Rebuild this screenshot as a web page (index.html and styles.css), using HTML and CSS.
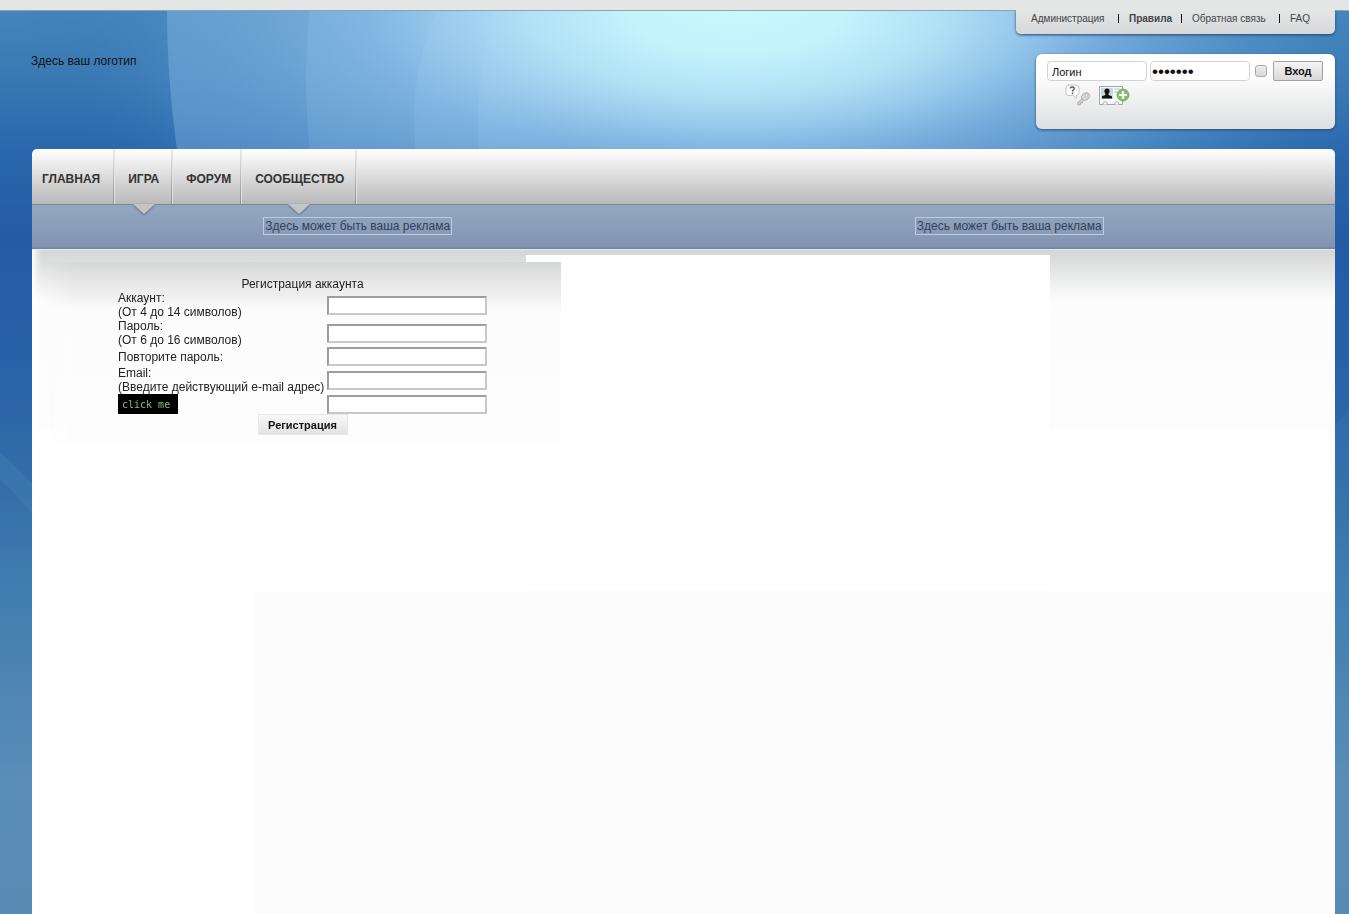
FILE: index.html
```
<!DOCTYPE html>
<html lang="ru">
<head>
<meta charset="utf-8">
<title>Регистрация аккаунта</title>
<link rel="stylesheet" href="styles.css">
</head>
<body>
<svg class="backdrop" viewBox="0 0 1349 914" preserveAspectRatio="none" aria-hidden="true">
  <defs>
    <linearGradient id="base" x1="0" y1="0" x2="0" y2="1">
      <stop offset="0" stop-color="#4588bb"/>
      <stop offset=".08" stop-color="#3a79b3"/>
      <stop offset=".16" stop-color="#2b68ad"/>
      <stop offset=".26" stop-color="#235ba5"/>
      <stop offset=".4" stop-color="#2862a8"/>
      <stop offset=".53" stop-color="#336ea9"/>
      <stop offset=".65" stop-color="#417eb0"/>
      <stop offset=".85" stop-color="#5a8db8"/>
      <stop offset="1" stop-color="#588ab4"/>
    </linearGradient>
    <radialGradient id="glow" gradientUnits="userSpaceOnUse" cx="0" cy="0" r="1" gradientTransform="translate(735 10) scale(710 290)">
      <stop offset="0" stop-color="#c8f7fd"/>
      <stop offset=".15" stop-color="#c4f3fc"/>
      <stop offset=".29" stop-color="#b0e2f5"/>
      <stop offset=".4" stop-color="#97c9ec"/>
      <stop offset=".52" stop-color="#76acdc"/>
      <stop offset=".7" stop-color="#5694ca" stop-opacity=".85"/>
      <stop offset=".85" stop-color="#4585c0" stop-opacity=".5"/>
      <stop offset="1" stop-color="#3474b4" stop-opacity="0"/>
    </radialGradient>
    <linearGradient id="fade">
      <stop offset="0" stop-color="#a3d2f6" stop-opacity=".3"/>
      <stop offset=".4" stop-color="#a3d2f6" stop-opacity="0"/>
    </linearGradient>
    <linearGradient id="soft">
      <stop offset="0" stop-color="#b8e0fa" stop-opacity=".12"/>
      <stop offset=".35" stop-color="#b8e0fa" stop-opacity="0"/>
    </linearGradient>
  </defs>
  <rect width="1349" height="914" fill="url(#base)"/>
  <rect width="1349" height="320" fill="url(#glow)"/>
  <ellipse cx="640" cy="10" rx="473" ry="680" fill="url(#fade)"/>
  <ellipse cx="690" cy="80" rx="384" ry="500" fill="url(#soft)"/>
  <ellipse cx="740" cy="120" rx="326" ry="300" fill="url(#soft)"/>
  <ellipse cx="740" cy="120" rx="262" ry="300" fill="url(#soft)"/>
  <path d="M0 452 Q18 468 32 484 V514 Q15 492 0 480Z" fill="#4a87b9" opacity=".3"/>
  <path d="M1335 425 Q1344 418 1349 408 V640 L1335 640Z" fill="#4a87b9" opacity=".15"/>
</svg>
<header class="top">
  <div class="strip"></div>
  <nav class="links" aria-label="Служебные ссылки">
    <a href="#">Администрация</a>
    <a href="#" class="strong">Правила</a>
    <a href="#">Обратная связь</a>
    <a href="#">FAQ</a>
  </nav>
  <div class="brand">
    <div class="logo">Здесь ваш логотип</div>
    <form class="login">
      <div class="login-row">
        <input class="field" type="text" value="Логин" aria-label="Логин">
        <input class="field secret" type="password" value="1234567" aria-label="Пароль">
        <input class="remember" type="checkbox" aria-label="Запомнить">
        <button class="enter" type="submit">Вход</button>
      </div>
      <div class="login-icons">
        <a href="#" aria-label="Забыли пароль?">
          <svg width="26" height="22" viewBox="0 0 26 22">
            <path d="M3 1h8q3 0 3 3v5q0 2-3 2.500l.5 3-3-3H4Q1 11.500 1 9V4q0-3 3-3z" fill="#fcfcfc" stroke="#bcbcbc" stroke-width=".8"/>
            <path d="M5.300 4.300Q5.500 3 7.300 3t2 1.500Q9.300 5.500 7.600 6.600V7.600" fill="none" stroke="#555" stroke-width="1.400"/>
            <circle cx="7.600" cy="9.300" r=".9" fill="#555"/>
            <path d="M18.500 13.300 12.800 18.500 13 21l2.300-.3.3-1.500 1.600-.2.3-1.600 2.500-1.800z" fill="#d0d0d0" stroke="#a6a6a6" stroke-width=".8"/>
            <ellipse cx="20.500" cy="12.500" rx="4.300" ry="3.500" transform="rotate(-40 20.500 12.500)" fill="#d8d8d8" stroke="#a6a6a6" stroke-width=".8"/>
            <circle cx="21.500" cy="11.400" r="1.200" fill="#fff" stroke="#999" stroke-width=".6"/>
          </svg>
        </a>
        <a href="#" aria-label="Регистрация">
          <svg width="32" height="22" viewBox="0 0 32 22">
            <path d="M1.500 2.500h23v18h-23z" fill="#f6f8f9" stroke="#a4a4a4"/>
            <path d="M3 4h12v11H3z" fill="#c9d8e0"/>
            <path d="M9 4.500q2.600 0 2.600 2.600 0 1.900-1.200 2.900 0 1.300 3.600 2.300V14.500H4v-2.200q3.600-1 3.600-2.300-1.200-1-1.200-2.900Q6.400 4.500 9 4.500z" fill="#111"/>
            <path d="M16 5h6M16 8h3" stroke="#bfc8cd"/>
            <path d="M5 20.500q0-3 2.200-3t2.200 3M16.500 20.500q0-3 2.200-3t2.200 3" fill="#fff" stroke="#999" stroke-width=".8"/>
            <circle cx="25" cy="11" r="6" fill="#86bd6c" stroke="#6fa659" stroke-width=".8"/>
            <path d="M25 7.200v7.600M21.200 11h7.600" stroke="#fff" stroke-width="2.200"/>
          </svg>
        </a>
      </div>
    </form>
  </div>
</header>
<main class="page">
  <nav class="menu" aria-label="Главное меню">
    <a href="#">ГЛАВНАЯ</a>
    <a href="#" class="drop">ИГРА</a>
    <a href="#">ФОРУМ</a>
    <a href="#" class="drop">СООБЩЕСТВО</a>
  </nav>
  <div class="ads">
    <div><a href="#">Здесь может быть ваша реклама</a></div>
    <div><a href="#">Здесь может быть ваша реклама</a></div>
  </div>
  <div class="content">
    <div class="side">
      <form class="register">
        <table>
          <tr><td colspan="2" class="center">Регистрация аккаунта</td></tr>
          <tr><td><label for="acc">Аккаунт:<br>(От 4 до 14 символов)</label></td><td class="entry"><input id="acc" type="text"></td></tr>
          <tr><td><label for="pw">Пароль:<br>(От 6 до 16 символов)</label></td><td class="entry"><input id="pw" type="password"></td></tr>
          <tr><td><label for="pw2">Повторите пароль:</label></td><td class="entry"><input id="pw2" type="password"></td></tr>
          <tr><td><label for="mail">Email:<br>(Введите действующий e-mail адрес)</label></td><td class="entry"><input id="mail" type="email"></td></tr>
          <tr><td><button type="button" class="captcha">click me</button></td><td class="entry"><input type="text" aria-label="Код"></td></tr>
          <tr><td colspan="2" class="center"><button type="submit" class="submit">Регистрация</button></td></tr>
        </table>
      </form>
    </div>
    <div class="middle"></div>
    <div class="right"></div>
  </div>
</main>
</body>
</html>
```
FILE: styles.css
```
* { box-sizing: border-box; }
body {
  margin: 0;
  min-height: 100vh;
  display: flex;
  flex-direction: column;
  position: relative;
  font: 12px/14px "Liberation Sans", Arial, sans-serif;
  color: #222;
}
a { color: inherit; text-decoration: none; }
.backdrop {
  position: absolute;
  inset: 0;
  width: 100%;
  height: 100%;
  z-index: -1;
}
.top { display: flex; flex-direction: column; height: 149px; }
.strip { height: 11px; background: #e4e6e6; border-bottom: 1px solid #8fa3af; flex: none; }
.links {
  align-self: flex-end;
  display: grid;
  grid-template-columns: 98px 63px 98px auto;
  align-content: start;
  width: 319px;
  height: 24px;
  margin: -1px 14px 0 0;
  padding: 4px 15px 0 5px;
  background: linear-gradient(#e4e6e6, #d6d8d9);
  border-radius: 0 0 5px 5px;
  box-shadow: 0 1px 3px #23456f;
  clip-path: inset(0 -4px -4px -4px);
  font-size: 10px;
  line-height: 9px;
  color: #444;
}
.links a { padding-left: 10px; white-space: nowrap; }
.links a:not(:last-child) { border-right: 1px solid #111; }
.strong { font-weight: bold; }
.brand { display: flex; justify-content: space-between; padding: 20px 14px 0 31px; }
.logo { color: #111; }
.login {
  width: 299px;
  height: 75px;
  padding: 7px 12px 0 11px;
  border-radius: 6px;
  background: linear-gradient(#fff 25%, #dedfe0);
  box-shadow: 0 1px 3px #274f7c;
}
.login-row { display: flex; align-items: center; gap: 3px; }
.field {
  width: 100px;
  height: 20px;
  padding: 2px 4px 0;
  border: 1px solid #d0d3d5;
  border-radius: 4px;
  background: #fff;
  font: 11px "Liberation Sans", Arial, sans-serif;
  color: #111;
}
.secret { padding: 1px 1px 0; font-size: 17px; }
.remember {
  appearance: none;
  width: 12px;
  height: 12px;
  margin: 0 auto 0 2px;
  border: 1px solid #a9a9a9;
  border-radius: 3px;
  background: linear-gradient(#eee, #d8d8d8);
}
.enter {
  width: 50px;
  height: 20px;
  padding: 0;
  border: 1px solid #a2a2a6;
  border-radius: 2px;
  background: linear-gradient(#f4f4f4, #d9d9dc);
  font: bold 11px "Liberation Sans", Arial, sans-serif;
  color: #111;
}
.login-icons { display: flex; gap: 7px; padding: 3px 0 0 18px; }
.login-icons svg { display: block; }
.page { flex: 1; display: flex; flex-direction: column; margin: 0 14px 0 32px; }
.menu {
  display: flex;
  height: 55px;
  border-radius: 5px 5px 0 0;
  background: linear-gradient(#fff, #eaeaea 30%, #b9b9ba);
  font-weight: bold;
  color: #333;
}
.menu a {
  position: relative;
  padding: 23px 12px 0 14px;
  border-right: 1px solid;
  border-image: linear-gradient(#eee, #888) 1;
  box-shadow: 1px 0 0 #e4e4e4;
}
.menu a:first-child { padding: 23px 13px 0 10px; }
.menu a:nth-child(3) { padding-right: 9px; }
.menu a:last-child { padding-right: 11px; }
.drop::after {
  content: "";
  position: absolute;
  left: calc(50% - 10px);
  top: 100%;
  border: solid transparent;
  border-width: 10px 11px 0;
  border-top-color: #c3c5c7;
  filter: drop-shadow(0 1px 1px #5d6b80);
}
.ads {
  display: grid;
  grid-template-columns: 1fr 1fr;
  height: 46px;
  padding-top: 12px;
  border-top: 1px solid #74859a;
  border-bottom: 1px solid #dce9f5;
  background: linear-gradient(#95a8c0, #8195b3 94%, #73829b);
  text-align: center;
  color: #31405a;
}
.ads a { display: inline-block; padding: 1px; border: 1px solid #bdcbdc; }
.content {
  flex: 1;
  display: grid;
  grid-template-columns: minmax(0, 494fr) minmax(0, 524fr) minmax(0, 285fr);
  background: linear-gradient(90deg, #fff 222px, transparent 223px), linear-gradient(#fff 341px, #fcfcfc 342px);
}
.side, .right { background: linear-gradient(#d3d6d5, #e4e5e5 20px, #fcfcfc 50px, #fdfdfd 180px, transparent 181px); }
.side { box-shadow: inset 8px 0 6px -4px #fff; }
.middle { border-top: 5px solid #d5d8d8; background: linear-gradient(#fff 335px, #fcfcfc 336px); }
.register {
  position: relative;
  width: 517px;
  margin: 12px 0 0 12px;
  padding: 15px 0 10px;
  background: linear-gradient(#d5d7d7, #e7e7e7 20px, #f1f1f1 36px, #fcfcfc 48px, #fdfdfd);
  mask-image: linear-gradient(90deg, transparent, #000 30px);
}
table { width: 369px; margin: 0 auto; border-collapse: collapse; }
td { padding: 0; }
.entry { width: 160px; }
.center { text-align: center; }
td input {
  display: block;
  width: 160px;
  height: 19px;
  padding: 1px;
  border: 2px solid #c8c8c8;
  border-color: #9d9d9d #c8c8c8 #c8c8c8 #9d9d9d;
  background: #fff;
  font: 12px "Liberation Sans", Arial, sans-serif;
}
.captcha {
  display: block;
  width: 60px;
  height: 20px;
  padding: 0 0 0 4px;
  border: 0;
  background: #000;
  color: #7fbf7f;
  font: 10px "DejaVu Sans Mono", monospace;
  text-align: left;
}
.submit {
  display: block;
  width: 90px;
  height: 21px;
  margin: 0 auto;
  padding: 0;
  border: 1px solid #e8e8e8;
  background: linear-gradient(#f8f8f8, #e2e2e2);
  font: bold 11px "Liberation Sans", Arial, sans-serif;
  color: #111;
}
```
